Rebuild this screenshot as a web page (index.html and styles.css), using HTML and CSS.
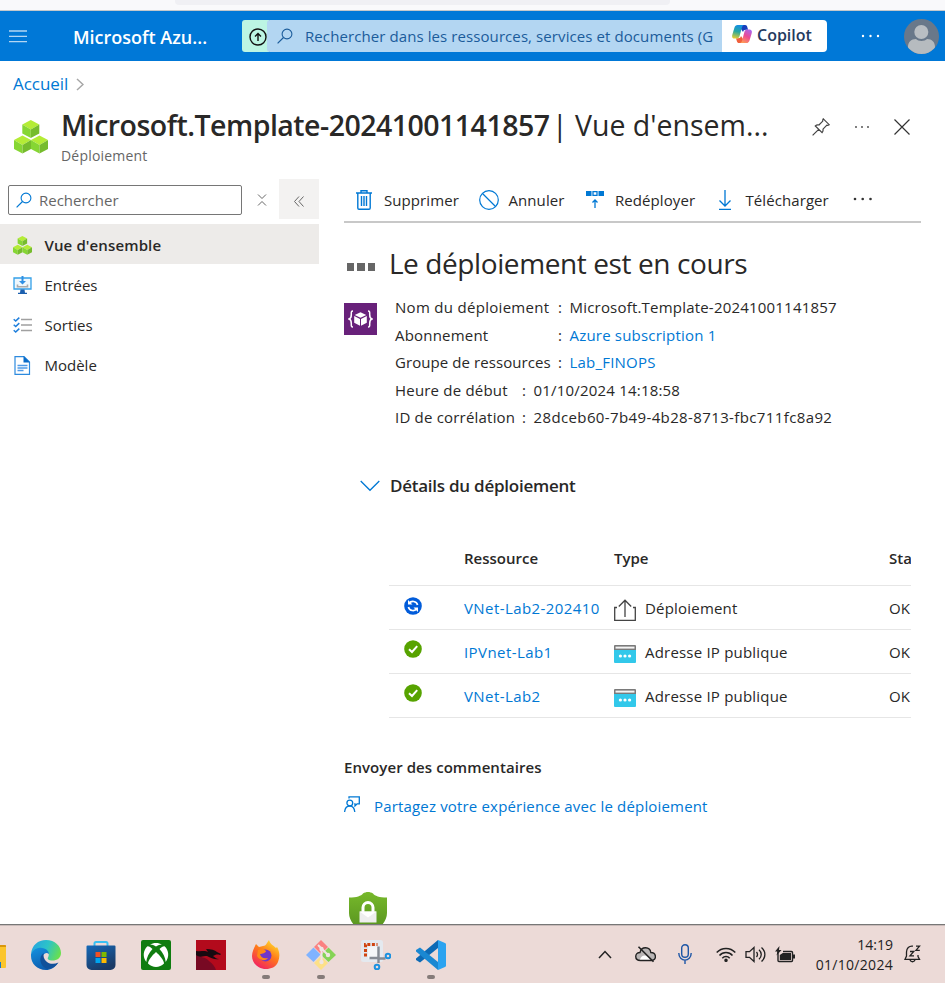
FILE: index.html
```html
<!DOCTYPE html>
<html lang="fr">
<head>
<meta charset="utf-8">
<title>Vue d'ensemble</title>
<link rel="stylesheet" href="styles.css">
</head>
<body>
<svg width="0" height="0" class="defs" aria-hidden="true">
  <defs>
    <g id="cube">
      <path d="M8.5 0 17 4.6 8.5 9.4 0 4.6z" fill="#b4ec36"/>
      <path d="M0 4.6 8.5 9.4V18L0 13.6z" fill="#86d633"/>
      <path d="M17 4.6 8.5 9.4V18l8.5-4.4z" fill="#76bc2d"/>
    </g>
    <symbol id="cubes" viewBox="0 0 34 34">
      <use href="#cube" x="8.3" y="0"/><use href="#cube" x="0" y="15.5"/><use href="#cube" x="17" y="15.5"/>
    </symbol>
    <symbol id="lens" viewBox="0 0 16 16">
      <circle cx="10" cy="6" r="4.9" fill="none" stroke="currentColor" stroke-width="1.1"/>
      <path d="M6.5 9.5.6 15.4" stroke="currentColor" stroke-width="1.2"/>
    </symbol>
    <symbol id="ok" viewBox="0 0 18 18">
      <circle cx="9" cy="9" r="8.8" fill="#57a300"/>
      <path d="M5 9.2 8 12l5.2-5.8" fill="none" stroke="#fff" stroke-width="2"/>
    </symbol>
    <symbol id="ip" viewBox="0 0 22 18">
      <path d="M0 4h22v13a1 1 0 0 1-1 1H1a1 1 0 0 1-1-1z" fill="#32c8ea"/>
      <path d="M1 0h20a1 1 0 0 1 1 1v4H0V1a1 1 0 0 1 1-1z" fill="#7a7a7a"/>
      <path d="M1.5 1.6h19v2h-19z" fill="#f4f4f4"/>
      <g fill="#fff"><circle cx="6.4" cy="11" r="1.6"/><circle cx="11" cy="11" r="1.6"/><circle cx="15.6" cy="11" r="1.6"/></g>
    </symbol>
  </defs>
</svg>

<div class="browser-edge"><div class="url-pill"></div></div>

<header class="topbar">
  <svg class="burger" viewBox="0 0 18 13"><path d="M0 1h18M0 6.3h18M0 11.600h18" stroke="#b3d6f3" stroke-width="1.300"/></svg>
  <span class="brand">Microsoft Azu...</span>
  <div class="upgrade"><svg width="18" height="18" viewBox="0 0 18 18" fill="none" stroke="#111" stroke-width="1.400"><circle cx="9" cy="9" r="8"/><path d="M9 13V5.600M6 8.400l3-3 3 3"/></svg></div>
  <div class="global-search"><svg width="16" height="16"><use href="#lens"/></svg><span>Rechercher dans les ressources, services et documents (G</span></div>
  <div class="copilot">
    <svg width="20" height="18" viewBox="0 0 20 18">
      <defs>
        <linearGradient id="cl" x1="0.3" y1="0" x2="0.1" y2="1"><stop offset="0" stop-color="#1690e0"/><stop offset=".45" stop-color="#27a7a0"/><stop offset="1" stop-color="#f3cf28"/></linearGradient>
        <linearGradient id="cr" x1="0.8" y1="0" x2="0.3" y2="1"><stop offset="0" stop-color="#a866ee"/><stop offset=".5" stop-color="#ec4a93"/><stop offset="1" stop-color="#ff9a58"/></linearGradient>
      </defs>
      <path d="M9 0h4.200c1.200 0 1.700.8 2 1.800l.9 3H14c-2 0-2.500.7-3 2.200L9 4z" fill="#173fbd"/>
      <path d="M11 18H7c-1.200 0-1.800-.8-2.100-1.800l-.9-3h2c2 0 2.500-.7 3-2.200l2 3z" fill="#f0603c"/>
      <path d="M5.500 0H12c-1 .2-1.600 1-2 2.300L7.600 11c-.4 1.500-1.300 2.500-2.600 2.500H2.500C.5 13.500-.3 12 .3 9.800L2.400 2.800C3 .9 4 0 5.500 0z" fill="url(#cl)"/>
      <path d="M14.500 18H8c1-.2 1.600-1 2-2.300L12.400 7c.4-1.500 1.300-2.500 2.600-2.500h2.500c2 0 2.800 1.500 2.200 3.700l-2.100 7c-.6 1.900-1.600 2.800-3.100 2.800z" fill="url(#cr)"/>
    </svg>
    <span>Copilot</span>
  </div>
  <svg class="top-dots" viewBox="0 0 20 4" fill="#fff"><circle cx="2" cy="2" r="1.200"/><circle cx="9.500" cy="2" r="1.200"/><circle cx="17" cy="2" r="1.200"/></svg>
  <svg class="avatar" viewBox="0 0 35 35"><defs><clipPath id="av"><circle cx="17.500" cy="17.500" r="17.500"/></clipPath></defs>
    <g clip-path="url(#av)"><path d="M0 0h35v35H0z" fill="#69788a"/><path d="M4 35v-7c0-5 3-8 8-8 2 2.500 9 2.500 11 0 5 0 8 3 8 8v7z" fill="#b6bbbf"/><circle cx="17.300" cy="13" r="8" fill="#69788a"/><circle cx="17.300" cy="13" r="7" fill="#b9bec3"/></g></svg>
</header>

<nav class="crumbs"><a>Accueil</a><svg width="8" height="13" viewBox="0 0 8 13"><path d="M1 1l6 5.500-6 5.500" fill="none" stroke="#a6a6a6" stroke-width="1.500"/></svg></nav>

<section class="title-row">
  <svg class="title-icon"><use href="#cubes"/></svg>
  <div class="title-text">
    <h1><b>Microsoft.Template-20241001141857</b> <span>| Vue d'ensem...</span></h1>
    <p>Déploiement</p>
  </div>
  <div class="title-actions">
    <svg width="18" height="18" viewBox="0 0 18 18" fill="none" stroke="#444" stroke-width="1.200"><path d="M11.300.8 17.200 6.700 15.800 7.300 14.900 7.200 11 11.100c.3 1.500 0 2.600-.9 3.600L3.300 7.900C4.300 7 5.400 6.700 6.900 7l3.900-3.900-.1-.9zM6.700 11.300.6 17.400"/></svg>
    <svg width="16" height="4" viewBox="0 0 16 4" fill="#444"><circle cx="2" cy="2" r=".9"/><circle cx="8" cy="2" r=".9"/><circle cx="14" cy="2" r=".9"/></svg>
    <svg width="16" height="16" viewBox="0 0 16 16" stroke="#333" stroke-width="1.200"><path d="M.5.5l15 15M15.500.5l-15 15"/></svg>
  </div>
</section>

<div class="body">
  <aside class="side">
    <div class="side-tools">
      <div class="side-search"><svg width="16" height="16"><use href="#lens"/></svg><span>Rechercher</span></div>
      <svg class="expand" viewBox="0 0 10 12" fill="none" stroke="#666"><path d="M1 .5l4 4 4-4M1 11.500l4-4 4 4"/></svg>
      <div class="collapse"><svg width="10" height="11" viewBox="0 0 10 11" fill="none" stroke="#666"><path d="M5 .5l-4.500 5 4.500 5M9.500.5 5 5.500l4.500 5"/></svg></div>
    </div>
    <a class="item active"><svg width="19" height="19"><use href="#cubes"/></svg><span>Vue d'ensemble</span></a>
    <a class="item"><svg width="19" height="19" viewBox="0 0 19 19"><path d="M1 2h17v11H1z" fill="#eef7fd" stroke="#35a0e8" stroke-width="1.300"/><path d="M8.500 0h2v5h2.500l-3.500 3.500L6 5h2.500z" fill="#2f8fe4"/><path d="M4.500 8.500v2.300h10V8.500" fill="none" stroke="#aaa" stroke-width="1.600"/><path d="M7.500 13.500h4l.5 3.300h2V18H5v-1.200h2z" fill="#1b5fae"/></svg><span>Entrées</span></a>
    <a class="item"><svg width="19" height="16" viewBox="0 0 19 16"><path d="M8 2.500h11M8 8h11M8 13.500h11" stroke="#a0a0a0" stroke-width="1.700"/><path d="M.7 2.300 2.700 4 6.300.6M.7 7.800l2 1.700 3.600-3.400M.7 13.300l2 1.700 3.600-3.400" fill="none" stroke="#1f7fdc" stroke-width="1.500"/></svg><span>Sorties</span></a>
    <a class="item"><svg width="19" height="19" viewBox="0 0 19 19"><path d="M2 .6h9l5.500 5.500v12.300H2z" fill="#fff" stroke="#2d8ade" stroke-width="1.200"/><path d="M10.500 0 17 6.500h-6.500z" fill="#0a6cc8"/><path d="M4.500 9.500h10M4.500 12h10M4.500 14.500h6" stroke="#4e9ae8" stroke-width="1.300"/></svg><span>Modèle</span></a>
  </aside>

  <main class="main">
    <div class="toolbar">
      <a class="b1"><svg width="16" height="20" viewBox="0 0 16 20" fill="none" stroke="#0078d4" stroke-width="1.400"><path d="M0 3h16M5 3V.8h6V3M1.800 3v15c0 .8.400 1.200 1.200 1.200h10c.8 0 1.200-.4 1.200-1.200V3M5.500 6v10M8 6v10M10.500 6v10"/></svg><span>Supprimer</span></a>
      <a class="b2"><svg width="20" height="20" viewBox="0 0 20 20" fill="none" stroke="#0078d4" stroke-width="1.200"><circle cx="10" cy="10" r="9.300"/><path d="M3.500 3.500l13 13"/></svg><span>Annuler</span></a>
      <a class="b3"><svg width="18" height="20" viewBox="0 0 18 20"><path d="M0 1h5.500v5H0zM12.500 1H18v5h-5.500z" fill="#0078d4"/><path d="M7 1.700h4v3.600H7zM9 18v-7.500M6.500 12.500 9 10l2.500 2.500" fill="none" stroke="#0078d4" stroke-width="1.300"/></svg><span>Redéployer</span></a>
      <a class="b4"><svg width="14" height="20" viewBox="0 0 14 20" fill="none" stroke="#0078d4" stroke-width="1.300"><path d="M7 0v16M1.500 10.500 7 16l5.500-5.500M1 19.300h12"/></svg><span>Télécharger</span></a>
      <svg class="more" viewBox="0 0 20 4" fill="#333"><circle cx="2" cy="2" r="1.300"/><circle cx="9.700" cy="2" r="1.300"/><circle cx="17.500" cy="2" r="1.300"/></svg>
    </div>

    <div class="status"><span class="squares"><i></i><i></i><i></i></span><h2>Le déploiement est en cours</h2></div>

    <div class="summary">
      <div class="tile"><svg width="25" height="18" viewBox="0 0 25 18"><path d="M5 1C3 1 3.300 2.500 3.300 4.500 3.300 7.500 3 8.500 1.200 9 3 9.500 3.300 10.500 3.300 13.500 3.300 15.500 3 17 5 17M20 1c2 0 1.700 1.500 1.700 3.500 0 3 .3 4 2.100 4.500-1.800.5-2.100 1.500-2.100 4.500 0 2 .3 3.500-1.700 3.500" fill="none" stroke="#fff" stroke-width="1.500"/><path d="M12.500 2.200 18.300 5l-5.800 2.800L6.700 5zM6.200 6l5.800 2.900v6.800l-5.800-3zM18.800 6 13 8.900v6.800l5.800-3z" fill="#fff"/></svg></div>
      <div class="facts">
        <dl class="wide">
          <dt class="loose">Nom du déploiement</dt><dd>Microsoft.Template-20241001141857</dd>
          <dt>Abonnement</dt><dd><a>Azure subscription 1</a></dd>
          <dt class="tight">Groupe de ressources</dt><dd><a>Lab_FINOPS</a></dd>
        </dl>
        <dl class="narrow">
          <dt>Heure de début</dt><dd>01/10/2024 14:18:58</dd>
          <dt>ID de corrélation</dt><dd class="guid">28dceb60-7b49-4b28-8713-fbc711fc8a92</dd>
        </dl>
      </div>
    </div>

    <div class="details-head"><svg width="20" height="12" viewBox="0 0 20 12"><path d="M.7 1 10 10.300 19.300 1" fill="none" stroke="#0078d4" stroke-width="1.300"/></svg><h3>Détails du déploiement</h3></div>

    <div class="grid">
      <div class="row head"><span></span><span><b>Ressource</b></span><span><b>Type</b></span><span><b>Sta</b></span></div>
      <div class="row"><span class="state syncing"><svg width="18" height="18" viewBox="0 0 18 18"><circle cx="9" cy="9" r="8.800" fill="#015cda"/><path d="M13.600 8A4.800 4.800 0 0 0 5 6.500M4.400 10a4.800 4.800 0 0 0 8.600 1.500" fill="none" stroke="#fff" stroke-width="1.700"/><path d="M4 3v4.500h4.500zM14 15v-4.500H9.500z" fill="#fff"/></svg></span><a>VNet-Lab2-202410</a><span class="type"><svg width="22" height="22" viewBox="0 0 22 22" fill="none" stroke="#444" stroke-width="1.300"><path d="M3 8.500H.7v12.800h20.600V8.500H19M11 18V1.500M4.800 7.500 11 1.200l6.200 6.300"/></svg><span>Déploiement</span></span><span>OK</span></div>
      <div class="row"><span class="state"><svg width="18" height="18"><use href="#ok"/></svg></span><a>IPVnet-Lab1</a><span class="type"><svg width="22" height="18"><use href="#ip"/></svg><span>Adresse IP publique</span></span><span>OK</span></div>
      <div class="row"><span class="state"><svg width="18" height="18"><use href="#ok"/></svg></span><a>VNet-Lab2</a><span class="type"><svg width="22" height="18"><use href="#ip"/></svg><span>Adresse IP publique</span></span><span>OK</span></div>
    </div>

    <h4>Envoyer des commentaires</h4>
    <div class="feedback"><svg width="16" height="17" viewBox="0 0 16 17" fill="none" stroke="#0078d4" stroke-width="1.300"><path d="M5 2.500V.8h10.300v7h-2.200L11 10V7.800h-.8"/><circle cx="5.800" cy="7" r="2.900"/><path d="M.6 16c.3-3.500 2.200-6 5.200-6s4.600 2.500 5 6"/></svg><a>Partagez votre expérience avec le déploiement</a></div>
    <svg class="shield" viewBox="0 0 38 43"><defs><linearGradient id="sh" x1="0" y1="0" x2="0" y2="1"><stop offset="0" stop-color="#77b92b"/><stop offset="1" stop-color="#538d1e"/></linearGradient></defs><path d="M0 5.500C8 5.500 12 4 14 1.500c3-2 7-2 10 0 2 2.500 6 4 14 4V21c0 11-12 19-19 22C12 40 0 32 0 21z" fill="url(#sh)"/><path d="M14 20v-4.500a5 5 0 0 1 10 0V20" fill="none" stroke="#fff" stroke-width="3"/><path d="M10.500 19.500h17v11h-17z" fill="#eee"/><path d="M10.500 19.500l8.500 6 8.500-6z" fill="#fff"/></svg>
  </main>
</div>

<footer class="taskbar">
  <div class="apps">
    <svg class="folder" width="6" height="23" viewBox="0 0 6 23"><path d="M0 0h5a1 1 0 0 1 1 1v21a1 1 0 0 1-1 1H0z" fill="#fbc52d"/><path d="M0 0h5a1 1 0 0 1 1 1v1H0z" fill="#d9970d"/><path d="M0 17h1v6H0z" fill="#1877c9"/></svg>
    <svg width="30" height="30" viewBox="0 0 30 30"><defs><linearGradient id="e1" x1="0" y1=".3" x2="1" y2=".6"><stop offset="0" stop-color="#28a5e0"/><stop offset=".5" stop-color="#2cc3c8"/><stop offset="1" stop-color="#6ae04c"/></linearGradient><linearGradient id="e2" x1="0" y1="0" x2=".5" y2="1"><stop offset="0" stop-color="#1493e0"/><stop offset="1" stop-color="#0d5aad"/></linearGradient></defs><path d="M0 14C1 5 7 0 15 0c9 0 15 6 15 13 0 5-4 7.500-8.500 7.500-4 0-5.500-1.500-4.500-3 2.500-4-1-8-6-8-4 0-8 1-11 4.500z" fill="url(#e1)"/><path d="M0 14c2.500-5 7-7 11-6 4 .6 7 3 7 6-4-3-8 2-5.500 7 2 4 8 6 14.500 2-3 4.500-7.500 7-12 7C6 30 0 23.500 0 16z" fill="url(#e2)"/><path d="M12.500 13c-5 4-4 12 2.500 15.500 5 1 9.500-1.500 12.500-6-7 3.500-16 0-15-9.500z" fill="#12509a"/></svg>
    <svg width="30" height="30" viewBox="0 0 30 30"><defs><linearGradient id="st" x1="0" y1="0" x2=".5" y2="1"><stop offset="0" stop-color="#1469b8"/><stop offset="1" stop-color="#1b3a66"/></linearGradient></defs><path d="M8.500 7V3.500c0-1 .5-1.500 1.500-1.500h10c1 0 1.500.5 1.500 1.500V7" fill="none" stroke="#39c1f3" stroke-width="2"/><path d="M.5 6.500a1 1 0 0 1 1-1h27a1 1 0 0 1 1 1V25a5 5 0 0 1-5 5h-19a5 5 0 0 1-5-5z" fill="url(#st)"/><path d="M9.500 12h5v5h-5z" fill="#f05023"/><path d="M15.500 12h5v5h-5z" fill="#7fba00"/><path d="M9.500 18h5v5h-5z" fill="#00a4ef"/><path d="M15.500 18h5v5h-5z" fill="#ffb900"/></svg>
    <svg width="30" height="30" viewBox="0 0 30 30"><rect width="30" height="30" rx="2" fill="#107c10"/><g fill="#fff"><path d="M15 3c2.300 0 4.300.6 6 1.500C18.500 4.300 16 6 15 6.600 14 6 11.500 4.300 9 4.500 10.700 3.600 12.700 3 15 3z"/><path d="M6.500 6.200C7.500 5.800 9.800 7.300 11.500 9 8 13 5.500 17.500 5.300 22 1.500 17 2 10.200 6.500 6.200z"/><path d="M23.500 6.200c-1-.4-3.300 1.100-5 2.800 3.500 4 6 8.500 6.200 13 3.800-5 3.300-11.800-1.200-15.800z"/><path d="M15 12c4 3.500 8 8.500 8 11.500-4.300 4.500-11.700 4.500-16 0C7 20.500 11 15.500 15 12z"/></g></svg>
    <svg width="30" height="30" viewBox="0 0 30 30"><path d="M0 0h30v30H0z" fill="#b30a1c"/><path d="M0 13c5 6 9 3 13 8 4 3 6 6 7 9H0z" fill="#780923"/><path d="M0 11c6 1 8-1 12 1l-2-3c5 0 9 1 11 3l4 2-1 1c-3-1-5 0-7 1 2 1 3 3 6 3-4 1-8-1-12-3-4 0-7 2-11-1z" fill="#180a10"/></svg>
    <div class="app"><svg width="30" height="30" viewBox="0 0 30 30"><defs><linearGradient id="ff" x1=".8" y1="0" x2=".2" y2="1"><stop offset="0" stop-color="#ffe32e"/><stop offset=".45" stop-color="#ff7a1a"/><stop offset="1" stop-color="#f01a68"/></linearGradient></defs><path d="M5 4l3 3 4-1c2 0 3-1 4-3l2-3c1 4 4 5 7 8l1-1c3 5 3 10 1 15-2 5-7 7-12 7C7 29 1 23 1 16c0-4 2-8 4-12z" fill="url(#ff)"/><circle cx="14.500" cy="15.500" r="6" fill="#7036c8"/><path d="M7 10c3-1 6-1 8 1 0 2-4 3-6 3 1 4 4 5 8 4-3 4-9 2-11-2z" fill="#ff8a16"/></svg><i></i></div>
    <div class="app"><svg width="30" height="30" viewBox="0 0 30 30"><path d="M15 0l7 7-7 7-7-7z" fill="#fa8080"/><path d="M7.500 7.500l7 7-7 7.500L0 15z" fill="#80b3ff"/><path d="M22.500 7.500 30 15l-7.500 7-7.500-7z" fill="#85d355"/><path d="M15 16l7 7-7 7-7-7z" fill="#fde088"/><path d="M12 5l11 11M15.500 8v14" stroke="#efe5e3" stroke-width="2"/><g fill="#efe5e3"><circle cx="15.500" cy="9" r="2.200"/><circle cx="22" cy="15" r="2.200"/><circle cx="15.500" cy="22" r="2.200"/></g></svg><i></i></div>
    <svg width="30" height="30" viewBox="0 0 30 30"><rect width="22" height="22" rx="2.500" fill="#e4e9ef"/><path d="M7 6.500h9v12H7z" fill="#f4f6f8"/><path d="M4.500 16.500v-12h12" fill="none" stroke="#d04511" stroke-width="3" stroke-dasharray="3 1.600"/><path d="M17.500 6.500v12h7M17.500 17v6M17 18H8.500" fill="none" stroke="#858b94" stroke-width="2.400"/><circle cx="27" cy="16" r="2.300" fill="none" stroke="#1b91e0" stroke-width="2"/><circle cx="16" cy="27" r="2.300" fill="none" stroke="#1b91e0" stroke-width="2"/></svg>
    <div class="app"><svg width="30" height="30" viewBox="0 0 30 30"><path d="M22 0v8L4 22.500 0 20v-1.500z" fill="#0d6ab5"/><path d="M22 30v-8L4 7.500 0 10v1.500z" fill="#1a88d2"/><path d="M22 0l7 3a1.500 1.500 0 0 1 1 1.500v21a1.500 1.500 0 0 1-1 1.500l-7 3z" fill="#2ba3f0"/></svg><i></i></div>
  </div>
  <div class="tray">
    <svg class="y1" width="14" height="9" viewBox="0 0 14 9"><path d="M1 8l6-6.500L13 8" fill="none" stroke="#222" stroke-width="1.500"/></svg>
    <svg class="y2" width="21" height="17" viewBox="0 0 21 17"><path d="M5.500 14.500C-1 14.500-.5 6.500 5 6.500 6.500 0 15 .5 15.800 6.500c6 0 6 8 .7 8z" fill="#b9b5b5" stroke="#222" stroke-width="1.400"/><path d="M5 13.500c1-4 5-5 7-3l3 3z" fill="#fff"/><path d="M3.500.8l15 15" stroke="#222" stroke-width="1.600"/></svg>
    <svg class="y3" width="14" height="21" viewBox="0 0 14 21" fill="none" stroke="#1d55a6" stroke-width="1.400"><rect x="3.700" y=".8" width="6.600" height="12.400" rx="3.300"/><path d="M.8 9c0 9.500 12.400 9.500 12.400 0M7 16v4"/></svg>
    <svg class="y4" width="20" height="15" viewBox="0 0 20 15" fill="none" stroke="#222" stroke-width="1.500"><path d="M.7 5.500c5-5.500 13.600-5.500 18.600 0M3.500 8.500c3.500-4 9.500-4 13 0M6.300 11.200c2-2.300 5.400-2.300 7.400 0"/><circle cx="10" cy="13.300" r="1" fill="#222"/></svg>
    <svg class="y5" width="21" height="17" viewBox="0 0 21 17" fill="none" stroke="#222" stroke-width="1.300"><path d="M1 5.700h3.500L9 1.500v14l-4.500-4.200H1zM11.500 6c1.200 1.500 1.200 3.500 0 5M14 3.700c3 2.800 3 6.800 0 9.600M16.500 1.500c4.500 4 4.500 10 0 14"/></svg>
    <svg class="y6" width="20" height="17" viewBox="0 0 20 17"><path d="M3 5v9.500c0 .6.400 1 1 1h12.500c.6 0 1-.4 1-1v-8c0-.6-.4-1-1-1H8" fill="none" stroke="#222" stroke-width="1.400"/><path d="M4.800 9l3-2H16v7H4.800zM18 8.500h2v4h-2zM4.500 0 0 5.500h2.500L1.500 9.500 6.500 4H4z" fill="#222"/></svg>
    <div class="clock"><span>14:19</span><span class="date">01/10/2024</span></div>
    <svg class="y7" width="17" height="18" viewBox="0 0 17 18" fill="none" stroke="#222" stroke-width="1.300"><path d="M9 1.200C5 .5 2.500 3.500 2.500 7v4L1 14.300h14.500L14 11.500V10M6 14.500c.5 3 4.500 3 5 0M6 6.500h3.800L6 10.800h4M12 1.200h3.500L12 5.300h3.800"/></svg>
  </div>
</footer>
</body>
</html>
```

FILE: styles.css
```css
* { box-sizing: border-box; }
html, body { margin: 0; padding: 0; }
body { width: 945px; height: 983px; overflow: hidden; background: #fff; color: #292827; font: 15px/20px "Open Sans", "Noto Sans", sans-serif; display: flex; flex-direction: column; position: relative; }
svg { display: block; flex: none; }
.defs { position: absolute; }
h1, h2, h3, h4, p, dl, dd { margin: 0; }
span, a, b, dt, dd, h2, h3, h4 { white-space: nowrap; }
a { color: #0078d4; }

.browser-edge { height: 11px; flex: none; background: #f9f9fb; border-bottom: 1px solid #c4c8cc; padding-left: 175px; }
.url-pill { width: 495px; height: 5px; background: #f0f0f4; border-radius: 0 0 4px 4px; }

.topbar { height: 50px; flex: none; background: #0078d7; display: flex; align-items: center; color: #fff; }
.burger { width: 18px; height: 13px; margin-left: 9px; }
.brand { width: 169px; margin-left: 46px; font-size: 18px; font-weight: 600; padding-top: 1px; }
.upgrade { width: 27px; height: 32px; background: #bcf5e3; border-radius: 3px 0 0 3px; padding: 8px 0 0 7px; }
.global-search { width: 455px; height: 32px; margin-left: -2px; background: #b3d6f2; color: #1b5c9b; border-radius: 3px 0 0 3px; display: flex; align-items: center; padding-left: 10px; gap: 12px; overflow: hidden; letter-spacing: .09px; }
.copilot { width: 105px; height: 32px; background: #fff; color: #243a5e; border-radius: 0 4px 4px 0; display: flex; padding: 5px 0 0 10px; gap: 5px; font-size: 16px; font-weight: 600; }
.top-dots { width: 20px; height: 4px; margin-left: 34px; }
.avatar { width: 35px; height: 35px; margin-left: 23px; }

.crumbs { height: 46px; flex: none; display: flex; align-items: center; padding-left: 13px; gap: 8px; font-size: 17px; letter-spacing: -.05px; }
.title-row { height: 72px; flex: none; display: flex; padding-left: 14px; }
.title-icon { width: 34px; height: 34px; margin-top: 13px; }
.title-text { width: 751px; flex: none; margin-left: 13px; }
h1 { font-size: 28.500px; line-height: 36px; font-weight: 400; white-space: nowrap; }
h1 b { font-weight: 600; letter-spacing: -.52px; }
h1 span { margin-left: -5px; }
.title-text p { font-size: 14px; color: #666; line-height: 20px; margin-top: 3px; letter-spacing: .2px; }
.title-actions { display: flex; align-items: center; height: 39px; padding-top: 1px; gap: 24px; }

.body { flex: 1; min-height: 0; display: flex; }
.side { width: 319px; flex: none; }
.side-tools { display: flex; height: 45px; padding-left: 8px; }
.side-search { width: 234px; height: 30px; margin-top: 6px; border: 1px solid #767676; border-radius: 2px; display: flex; align-items: center; padding-left: 7px; gap: 7px; color: #666; }
.side-search svg { color: #0078d4; }
.expand { width: 10px; height: 12px; margin: 15px 0 0 15px; }
.collapse { width: 40px; height: 40px; margin-left: 12px; background: #f3f2f1; padding: 17px 0 0 15px; }
.item { height: 40px; display: flex; align-items: center; padding: 2px 0 0 13px; gap: 12.500px; color: #292827; }
.active { background: #edebe9; font-weight: 600; letter-spacing: .12px; }

.main { width: 577px; margin-left: 25px; overflow: hidden; }
.toolbar { height: 44px; border-bottom: 2px solid #c8c8c8; display: flex; align-items: center; padding-left: 12px; letter-spacing: .08px; }
.toolbar a { display: flex; align-items: center; color: #292827; }
.b1 { gap: 12px; width: 123px; }
.b2 { gap: 9.500px; width: 107px; }
.b3 { gap: 11px; width: 132px; }
.b4 { gap: 13.500px; width: 135px; }
.more { width: 20px; height: 4px; margin-top: -3px; }

.status { display: flex; align-items: center; height: 80px; padding-left: 3px; gap: 14px; }
.squares { display: flex; gap: 3px; padding-top: 7px; }
.squares i { width: 7.300px; height: 8px; background: #666; }
h2 { font-size: 28px; line-height: 36px; font-weight: 400; letter-spacing: -.4px; }

.summary { display: flex; gap: 18px; }
.tile { width: 33px; height: 32px; background: #68217a; padding: 7px 0 0 4px; }
.facts { margin-top: -9.500px; letter-spacing: .2px; }
.facts dl { display: grid; grid-auto-rows: 27.500px; align-items: center; }
.facts .loose { letter-spacing: .3px; }
.facts .tight { letter-spacing: .08px; }
.facts .guid { letter-spacing: .38px; }
.wide { grid-template-columns: 163px auto; }
.narrow { grid-template-columns: 127px auto; }
dd::before { content: ":"; display: inline-block; width: 11.500px; }

.details-head { display: flex; align-items: center; margin-top: 38.500px; height: 32px; padding-left: 16px; gap: 10px; }
h3 { font-size: 17px; line-height: 24px; font-weight: 600; letter-spacing: -.25px; }

.grid { margin: 30px 10px 0 45px; }
.row { display: grid; grid-template-columns: 75px 150px 275px auto; height: 44px; align-items: center; border-bottom: 1px solid #e6e6e6; padding-top: 1px; overflow: hidden; letter-spacing: .2px; }
.row a { letter-spacing: .42px; }
.head { height: 54px; padding-top: 0; letter-spacing: 0; }
.head b, h4 { font-weight: 600; }
.state { padding-left: 15px; align-self: start; margin-top: 9px; }
.syncing { margin-top: 10px; }
.type { display: flex; align-items: center; gap: 9px; }
.type svg { margin: 4px 0 0; }
h4 { font-size: 15px; line-height: 20px; margin-top: 39px; letter-spacing: .07px; }
.feedback { display: flex; gap: 14px; margin-top: 19px; letter-spacing: .17px; }
.shield { width: 38px; height: 43px; margin: 76px 0 0 5px; }

.taskbar { height: 59px; flex: none; background: #ecdad7; border-top: 1px solid #777; box-shadow: inset 0 1px #c9bbb9; display: flex; justify-content: space-between; position: relative; }
.apps { display: flex; align-items: flex-start; padding-top: 15px; gap: 25px; }
.folder { margin: 5px -.5px 0 0; }
.app { display: flex; flex-direction: column; align-items: center; }
.app i { width: 8px; height: 4px; border-radius: 2px; background: #857b79; margin-top: 5px; }
.tray { display: flex; align-items: center; padding-right: 24px; }
.y2 { margin-left: 23px; }
.y3 { margin-left: 22px; }
.y4 { margin-left: 24px; }
.y5 { margin-left: 9px; }
.y6 { margin-left: 9px; }
.clock { width: 78px; margin: 0 11px 0 20px; padding-top: 2px; font-size: 14px; line-height: 20px; display: flex; flex-direction: column; align-items: flex-end; color: #222; }
.date { letter-spacing: .3px; }
```
